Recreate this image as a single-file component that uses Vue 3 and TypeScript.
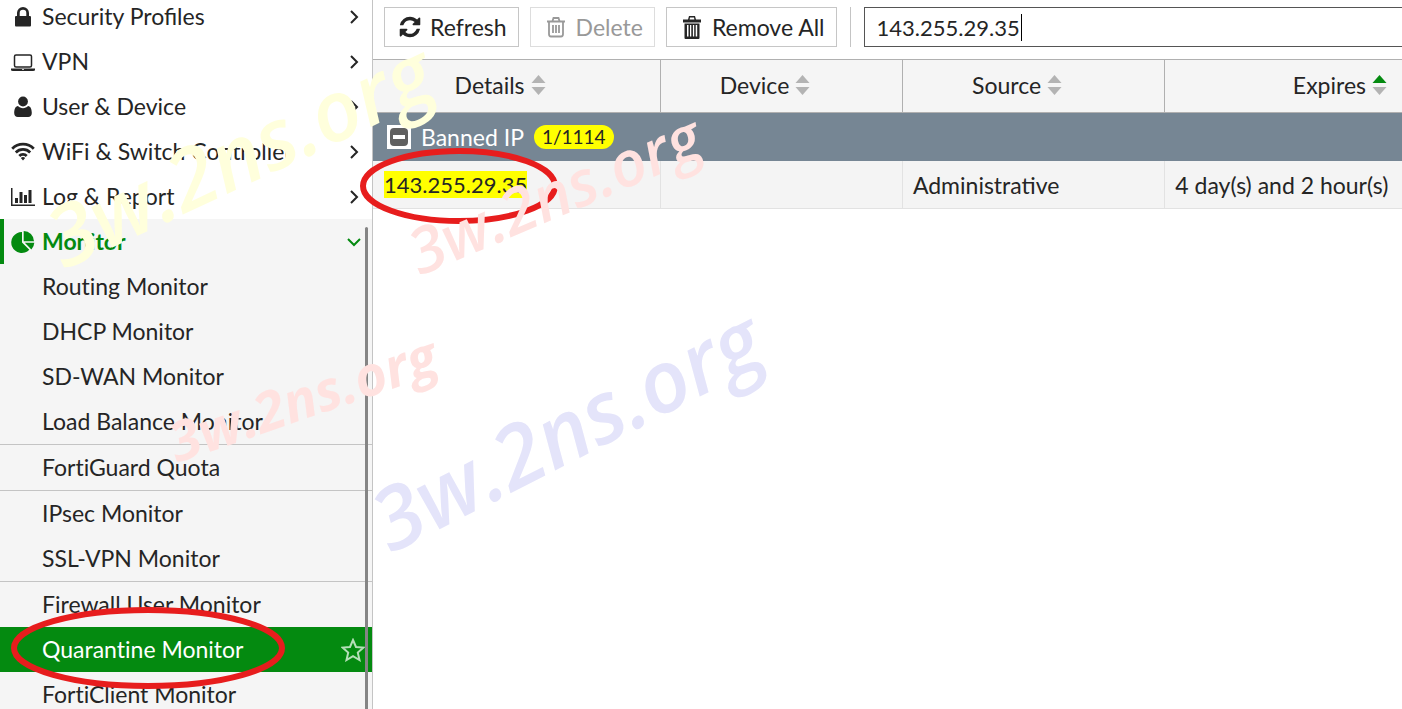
<script setup lang="ts">
import { ref } from 'vue'

interface MenuItem {
  label: string
  icon: 'lock' | 'laptop' | 'user' | 'wifi' | 'chart'
}
interface SubItem {
  label: string
  divider?: boolean
  active?: boolean
}
interface Column {
  label: string
  key: string
  sorted?: boolean
}

const menu: MenuItem[] = [
  { label: 'Security Profiles', icon: 'lock' },
  { label: 'VPN', icon: 'laptop' },
  { label: 'User & Device', icon: 'user' },
  { label: 'WiFi & Switch Controller', icon: 'wifi' },
  { label: 'Log & Report', icon: 'chart' },
]

const monitors: SubItem[] = [
  { label: 'Routing Monitor' },
  { label: 'DHCP Monitor' },
  { label: 'SD-WAN Monitor' },
  { label: 'Load Balance Monitor', divider: true },
  { label: 'FortiGuard Quota', divider: true },
  { label: 'IPsec Monitor' },
  { label: 'SSL-VPN Monitor', divider: true },
  { label: 'Firewall User Monitor' },
  { label: 'Quarantine Monitor', active: true },
  { label: 'FortiClient Monitor' },
]

const columns: Column[] = [
  { label: 'Details', key: 'details' },
  { label: 'Device', key: 'device' },
  { label: 'Source', key: 'source' },
  { label: 'Expires', key: 'expires', sorted: true },
]

const search = ref('143.255.29.35')
</script>

<template>
  <div class="app">
    <nav class="sidebar" aria-label="Main menu">
      <div class="menu">
        <a v-for="item in menu" :key="item.label" class="row top" href="#">
          <svg class="icon" viewBox="0 0 24 24" aria-hidden="true">
            <path v-if="item.icon === 'lock'" fill-rule="evenodd" d="M6 11V8a6 6 0 0 1 12 0v3h.7c.8 0 1.300.5 1.300 1.300v7.900c0 .8-.5 1.300-1.300 1.300H5.300c-.8 0-1.300-.5-1.300-1.300v-7.900c0-.8.5-1.300 1.300-1.300zm2.700 0h6.600V8a3.300 3.300 0 0 0-6.600 0z" />
            <g v-else-if="item.icon === 'laptop'">
              <rect x="3.500" y="5" width="17" height="12" rx="1.500" fill="none" stroke="currentColor" stroke-width="1.500" />
              <path fill-rule="evenodd" d="M0 18.500h24V20q0 1-2 1H2q-2 0-2-1zm11 .6v.7h2v-.7z" />
            </g>
            <g v-else-if="item.icon === 'user'">
              <circle cx="12" cy="6.500" r="4.900" />
              <path d="M7 11c1.300 1.400 3 2.200 5 2.200s3.700-.8 5-2.200c2.700.3 3.800 3.300 3.800 7 0 2.700-1.500 4-3.600 4H6.800c-2.100 0-3.600-1.300-3.600-4 0-3.700 1.100-6.700 3.800-7z" />
            </g>
            <g v-else-if="item.icon === 'wifi'">
              <path d="M1.200 8.800a15 15 0 0 1 21.600 0M4.800 12.500a10 10 0 0 1 14.400 0M8.300 16a5 5 0 0 1 7.400 0" fill="none" stroke="currentColor" stroke-width="2.700" />
              <path d="M9.800 18a3.300 3.300 0 0 1 4.400 0L12 20.500z" />
            </g>
            <path v-else d="M0 3h1.500v16.500H24V21H0zM4 13h3v5H4zm4.500-6h3v11h-3zM13 10h3v8h-3zm4.500-5h3v13h-3z" />
          </svg>
          <span class="label">{{ item.label }}</span>
          <svg class="arrow" viewBox="0 0 14 14" aria-hidden="true"><path d="M4 1l6 6-6 6" /></svg>
        </a>
        <section class="open">
          <a class="row top current" href="#">
            <svg class="icon" viewBox="0 0 24 24" aria-hidden="true">
              <path d="M11 2v10.500l7.300 7.300A10.500 10.500 0 1 1 11 2z" />
              <path d="M12.700 1A10.500 10.500 0 0 1 23 11.300H12.700z" />
              <path d="M13.800 12.800H23.300a10.500 10.500 0 0 1-2.900 6.700z" />
            </svg>
            <span class="label">Monitor</span>
            <svg class="arrow" viewBox="0 0 14 14" aria-hidden="true"><path d="M1 4l6 6 6-6" /></svg>
          </a>
          <a
            v-for="item in monitors"
            :key="item.label"
            class="row sub"
            :class="{ divider: item.divider, active: item.active }"
            href="#"
          >
            <span class="label">{{ item.label }}</span>
            <svg v-if="item.active" class="star" viewBox="0 0 24 24" aria-hidden="true">
              <path d="M12 2l3 7 7.500.6-5.700 5 1.700 7.400-6.500-3.900L5.500 22l1.700-7.400-5.700-5L9 9z" />
            </svg>
          </a>
          <span class="thumb"></span>
        </section>
      </div>
    </nav>

    <main class="content">
      <div class="toolbar">
        <button type="button" class="btn">
          <svg class="bicon" viewBox="0 0 1792 1792" aria-hidden="true">
            <path d="M1639 1056q0 5-1 7-64 268-268 434.500t-478 166.500q-146 0-282.500-55t-243.500-157l-129 129q-19 19-45 19t-45-19-19-45v-448q0-26 19-45t45-19h448q26 0 45 19t19 45-19 45l-137 137q71 66 161 102t187 36q134 0 250-65t186-179q11-17 53-117 8-23 30-23h192q13 0 22.500 9.500t9.500 22.500zm25-800v448q0 26-19 45t-45 19h-448q-26 0-45-19t-19-45 19-45l138-138q-148-137-349-137-134 0-250 65t-186 179q-11 17-53 117-8 23-30 23h-199q-13 0-22.500-9.500t-9.500-22.500v-7q65-268 270-434.500t480-166.500q146 0 284 55.500t245 156.500l130-129q19-19 45-19t45 19 19 45z" />
          </svg>
          Refresh
        </button>
        <button type="button" class="btn" disabled>
          <svg class="bicon" viewBox="0 0 24 24" aria-hidden="true">
            <path d="M3 6.500h18M8.500 6l1-3h5l1 3M5 6.500v12.500q0 2.500 2 2.500h10q2 0 2-2.500V6.500M9 10v8M12 10v8M15 10v8" fill="none" stroke="currentColor" stroke-width="1.800" />
          </svg>
          Delete
        </button>
        <button type="button" class="btn">
          <svg class="bicon" viewBox="0 0 24 24" aria-hidden="true">
            <path fill-rule="evenodd" d="M3 4.500h5L9 1h6l1 3.500h5v3H3zm6.600 0h4.800L14 2.500h-4zM4.500 8.500h15v14.500q0 1-1 1h-13q-1 0-1-1zM7 10v11.500h1.500V10zm3 0v11.500h1.300V10zm2.900 0v11.500h1.300V10zm2.800 0v11.500h1.500V10z" />
          </svg>
          Remove All
        </button>
        <span class="sep"></span>
        <input v-model="search" class="search" type="text" aria-label="Search" />
        <span class="caret"></span>
      </div>

      <table class="grid">
        <colgroup>
          <col class="c1" />
          <col class="c2" />
          <col class="c3" />
          <col />
        </colgroup>
        <thead>
          <tr>
            <th v-for="col in columns" :key="col.key" scope="col">
              <span class="head">
                {{ col.label }}
                <svg class="sort" viewBox="0 0 14 20" aria-hidden="true">
                  <path :class="{ on: col.sorted }" d="M7 0l7 8H0z" />
                  <path d="M0 12h14l-7 8z" />
                </svg>
              </span>
            </th>
          </tr>
        </thead>
        <tbody>
          <tr class="group">
            <td colspan="4">
              <div class="group-line">
                <button type="button" class="toggle" aria-label="Collapse Banned IP"><i></i></button>
                <span>Banned IP</span>
                <span class="count">1/1114</span>
              </div>
            </td>
          </tr>
          <tr class="entry">
            <td><mark>143.255.29.35</mark></td>
            <td></td>
            <td>Administrative</td>
            <td>4 day(s) and 2 hour(s)</td>
          </tr>
        </tbody>
      </table>
    </main>

    <svg class="overlay" aria-hidden="true">
      <g class="rings">
        <ellipse cx="459" cy="186" rx="96" ry="35" />
        <ellipse cx="148" cy="648" rx="134" ry="38" />
      </g>
      <text class="mark yellow" transform="translate(64 270) rotate(-25)">3w.2ns.org</text>
      <text class="mark pink" transform="translate(420 276) rotate(-23)">3w.2ns.org</text>
      <text class="mark rose" transform="translate(177 463) rotate(-19)">3w.2ns.org</text>
      <text class="mark violet" transform="translate(391 554) rotate(-27)">3w.2ns.org</text>
    </svg>
  </div>
</template>

<style>
body {
  margin: 0;
  overflow: hidden;
}
</style>

<style scoped>
.app {
  position: relative;
  display: flex;
  height: 100vh;
  overflow: hidden;
  background: #fff;
  color: #252525;
  font: 23px/32px Lato, sans-serif;
}
.sidebar {
  flex: none;
  box-sizing: border-box;
  width: 373px;
  border-right: 1px solid #c4c4c4;
  overflow: hidden;
}
.menu {
  margin-top: -6px;
}
.row {
  display: flex;
  align-items: center;
  box-sizing: border-box;
  height: 45px;
  padding: 0 11px 0 11px;
  color: inherit;
  text-decoration: none;
}
.label {
  flex: 1;
  padding-bottom: 2px;
  white-space: nowrap;
}
.sub .label {
  font-variant-ligatures: no-common-ligatures;
}
.icon {
  width: 24px;
  height: 24px;
  margin-right: 7px;
  fill: currentColor;
}
.arrow {
  width: 14px;
  height: 14px;
  fill: none;
  stroke: currentColor;
  stroke-width: 2;
}
.open {
  position: relative;
  background: #f5f5f5;
}
.current {
  padding-left: 7px;
  border-left: 4px solid #048a10;
  color: #048a10;
  font-weight: 700;
}
.sub {
  padding: 0 7px 0 42px;
}
.divider {
  height: 46px;
  border-bottom: 1px solid #c4c4c4;
}
.active {
  background: #048a10;
  color: #fff;
}
.star {
  width: 24px;
  height: 24px;
  fill: none;
  stroke: #b5dfb8;
  stroke-width: 2;
}
.thumb {
  position: absolute;
  top: 8px;
  right: 4px;
  bottom: 0;
  width: 3px;
  border-radius: 2px 2px 0 0;
  background: #858585;
}
.content {
  flex: 1;
  min-width: 0;
}
.toolbar {
  display: flex;
  align-items: center;
  height: 40px;
  padding: 7px 0 12px 11px;
}
.btn {
  display: flex;
  flex: none;
  align-items: center;
  gap: 8px;
  box-sizing: border-box;
  height: 40px;
  margin-right: 11px;
  padding: 0 11px 0 13px;
  border: 1px solid #c6c6c6;
  background: #fff;
  color: inherit;
  font: inherit;
  white-space: nowrap;
}
.btn:disabled {
  border-color: #ddd;
  color: #999;
}
.bicon {
  width: 24px;
  height: 24px;
  fill: currentColor;
}
.sep {
  width: 1px;
  height: 40px;
  margin: 0 13px 0 2px;
  background: #c4c4c4;
}
.search {
  flex: 1;
  box-sizing: border-box;
  min-width: 0;
  height: 40px;
  padding: 0 12px;
  border: 1px solid #555;
  border-right: 0;
  border-radius: 0;
  outline: 0;
  background: #fff;
  color: inherit;
  font: inherit;
  font-size: 22px;
}
.caret {
  position: absolute;
  top: 14px;
  left: 1021px;
  width: 1px;
  height: 27px;
  background: #000;
}
.grid {
  width: 100%;
  border-spacing: 0;
  table-layout: fixed;
}
.c1 {
  width: 28%;
}
.c2 {
  width: 23.500%;
}
.c3 {
  width: 25.500%;
}
th {
  box-sizing: border-box;
  height: 54px;
  padding: 0 33px 2px 0;
  border: solid #b0b0b0;
  border-width: 1px 1px 1px 0;
  background: #f5f5f5;
  font-weight: 400;
}
th:last-child {
  padding-right: 15px;
  border-right: 0;
  text-align: right;
}
.head {
  display: inline-flex;
  align-items: center;
  gap: 6px;
}
.sort {
  width: 15px;
  height: 20px;
  fill: #b3b3b3;
}
.on {
  fill: #048a10;
}
td {
  box-sizing: border-box;
  height: 48px;
  padding: 0 10px;
  white-space: nowrap;
}
.group td {
  padding-left: 14px;
  background: #768694;
  color: #fff;
}
.group-line {
  display: flex;
  align-items: center;
  gap: 10px;
}
.group-line > span {
  margin-bottom: 1px;
}
.toggle {
  display: flex;
  align-items: center;
  justify-content: center;
  width: 24px;
  height: 24px;
  padding: 0;
  border: 3px solid #fff;
  border-radius: 0;
  background: #fff;
}
.toggle i {
  flex: none;
  box-sizing: border-box;
  width: 18px;
  height: 18px;
  border: solid #606060;
  border-width: 7px 3px;
  border-radius: 4px;
  background: #fff;
}
.count {
  padding: 0 8px;
  border-radius: 12px;
  background: #ff0;
  color: #252525;
  font-size: 19px;
  line-height: 24px;
}
.entry td {
  border-right: 1px solid #e2e2e2;
  border-bottom: 1px solid #e2e2e2;
  background: #f4f4f4;
}
.entry td:first-child {
  padding-left: 11px;
  font-size: 22px;
}
.entry td:last-child {
  border-right: 0;
}
mark {
  background: #ff0;
  color: inherit;
}
.overlay {
  position: absolute;
  inset: 0;
  width: 100%;
  height: 100%;
  pointer-events: none;
}
.rings {
  fill: none;
  stroke: #e71d1d;
  stroke-width: 6;
}
.mark {
  font-family: "Open Sans", sans-serif;
  font-style: italic;
  font-weight: 600;
}
.yellow {
  fill: #ffffdc;
  font-size: 84px;
}
.pink {
  fill: #ffe2e0;
  font-size: 63px;
}
.rose {
  fill: #ffe2e0;
  font-size: 55px;
  font-weight: 700;
}
.violet {
  fill: #e4e4fa;
  font-size: 86px;
}
</style>
